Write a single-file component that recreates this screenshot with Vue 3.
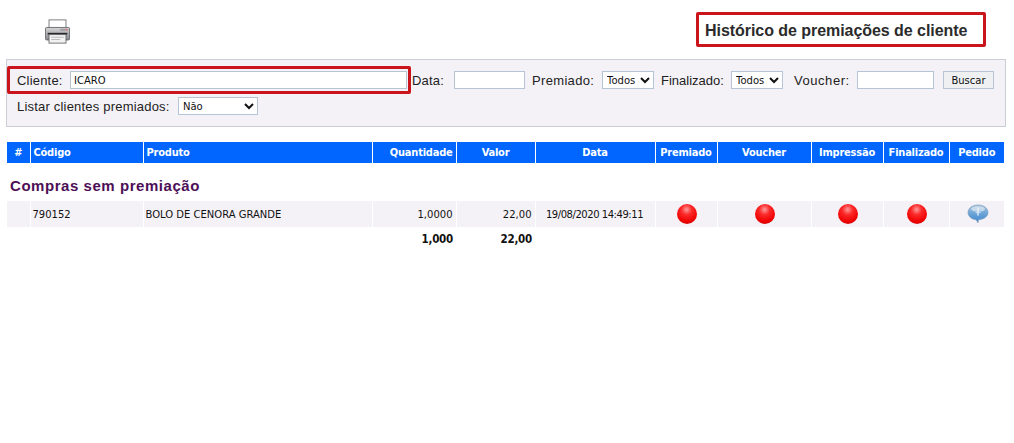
<script setup>
const columns = [
  { label: '#', width: 23, align: 'center' },
  { label: 'Código', width: 113, align: 'left' },
  { label: 'Produto', width: 229, align: 'left' },
  { label: 'Quantidade', width: 84, align: 'right' },
  { label: 'Valor', width: 79, align: 'center' },
  { label: 'Data', width: 120, align: 'center' },
  { label: 'Premiado', width: 62, align: 'center' },
  { label: 'Voucher', width: 94, align: 'center' },
  { label: 'Impressão', width: 72, align: 'center' },
  { label: 'Finalizado', width: 66, align: 'center' },
  { label: 'Pedido', width: 55, align: 'center' },
]
const dots = ['a', 'b', 'c', 'd']
</script>

<template>
  <div class="page">
    <header class="top">
      <svg class="printer" width="25" height="25" viewBox="0 0 28 28">
        <defs>
          <linearGradient id="pbody" x1="0" y1="0" x2="0" y2="1">
            <stop offset="0" stop-color="#d6d6d8" />
            <stop offset="1" stop-color="#85868a" />
          </linearGradient>
        </defs>
        <rect x="4.500" y="1" width="19" height="10" fill="#fff" stroke="#6f7074" />
        <path d="M2 9.500h24a1.500 1.500 0 0 1 1.500 1.500v11a1.500 1.500 0 0 1-1.500 1.500H2A1.500 1.500 0 0 1 .5 22V11A1.500 1.500 0 0 1 2 9.500z" fill="url(#pbody)" stroke="#66676b" />
        <rect x="17" y="11" width="6" height="2" fill="#9a9a9e" />
        <rect x="23" y="11" width="2.500" height="2" fill="#c9757a" />
        <rect x="3" y="15.500" width="22" height="2" fill="#26262a" />
        <rect x="4.500" y="17.500" width="19" height="9.500" fill="#f2f2f2" stroke="#66676b" />
        <path d="M7 20.500h14M7 23h10" stroke="#b5b5b8" />
      </svg>
      <h1 class="title">Histórico de premiações de cliente</h1>
    </header>

    <form class="filters" @submit.prevent>
      <div class="row">
        <div class="client">
          <label class="lbl cli-lbl">Cliente:</label>
          <input class="ctl client-input" value="ICARO" />
        </div>
        <label class="lbl data-lbl">Data:</label>
        <input class="ctl data-input" />
        <label class="lbl prem-lbl">Premiado:</label>
        <select class="ctl sel todos"><option>Todos</option></select>
        <label class="lbl fin-lbl">Finalizado:</label>
        <select class="ctl sel todos"><option>Todos</option></select>
        <label class="lbl vou-lbl">Voucher:</label>
        <input class="ctl vou-input" />
        <button class="ctl btn" type="button">Buscar</button>
      </div>
      <div class="row second">
        <label class="lbl list-lbl">Listar clientes premiados:</label>
        <select class="ctl sel nao"><option>Não</option></select>
      </div>
    </form>

    <table class="grid">
      <colgroup>
        <col v-for="c in columns" :key="c.label" :style="{ width: c.width + 'px' }" />
      </colgroup>
      <thead>
        <tr>
          <th v-for="c in columns" :key="c.label" :class="'a-' + c.align">{{ c.label }}</th>
        </tr>
      </thead>
      <tbody>
        <tr class="group">
          <td colspan="11">Compras sem premiação</td>
        </tr>
        <tr class="item">
          <td></td>
          <td>790152</td>
          <td>BOLO DE CENORA GRANDE</td>
          <td class="a-right">1,0000</td>
          <td class="a-right">22,00</td>
          <td class="a-center date">19/08/2020 14:49:11</td>
          <td v-for="d in dots" :key="d" class="a-center icon">
            <svg width="20" height="20" viewBox="0 0 20 20">
              <defs>
                <radialGradient :id="'ball' + d" cx="0.48" cy="0.28" r="0.75">
                  <stop offset="0" stop-color="#ff9a9a" />
                  <stop offset="0.35" stop-color="#fb2a2a" />
                  <stop offset="0.8" stop-color="#f00000" />
                  <stop offset="1" stop-color="#c80a0a" />
                </radialGradient>
              </defs>
              <circle cx="10" cy="10" r="10" :fill="'url(#ball' + d + ')'" />
            </svg>
          </td>
          <td class="a-center icon">
            <svg width="22" height="20" viewBox="0 0 22 20">
              <defs>
                <linearGradient id="bubble" x1="0" y1="0" x2="0" y2="1">
                  <stop offset="0" stop-color="#a8c6e0" />
                  <stop offset="0.45" stop-color="#6fa6d8" />
                  <stop offset="1" stop-color="#3b86d0" />
                </linearGradient>
              </defs>
              <path d="M11 1C5.500 1 1 4 1 8.500c0 4 4 7 8 7.200l2 3 .5-3c5-.2 9.500-3 9.500-7.200C21 4 16.500 1 11 1z" fill="url(#bubble)" stroke="#7f9fbc" stroke-width=".7" />
              <ellipse cx="11" cy="5" rx="7" ry="2.800" fill="#dbe6f0" opacity=".75" />
              <path d="M11 3.500v8" stroke="#e8f1fa" stroke-width="1.400" />
              <path d="M8.500 8.500h5" stroke="#cfe2f5" stroke-width="1" />
            </svg>
          </td>
        </tr>
        <tr class="total">
          <td colspan="3"></td>
          <td class="a-right">1,000</td>
          <td class="a-right">22,00</td>
          <td colspan="6"></td>
        </tr>
      </tbody>
    </table>
  </div>
</template>

<style>
html, body { margin: 0; background: #fff; }
</style>

<style scoped>
.page {
  width: 1014px;
  height: 443px;
  overflow: hidden;
  font-family: "DejaVu Sans", sans-serif;
  color: #111;
}
.top {
  display: flex;
  justify-content: space-between;
  align-items: flex-start;
  height: 59px;
  padding: 12px 28px 0 45px;
  box-sizing: border-box;
}
.printer { margin-top: 7px; }
.title {
  margin: 0;
  width: 290px;
  height: 35px;
  box-sizing: border-box;
  border: 3px solid #c9151b;
  border-radius: 2px;
  padding-left: 6px;
  font: bold 16px/31px "Liberation Sans", sans-serif;
  letter-spacing: -.05px;
  color: #2b2b2b;
  white-space: nowrap;
}
.filters {
  margin-left: 6px;
  width: 1000px;
  height: 68px;
  box-sizing: border-box;
  border: 1px solid #c9ced4;
  background: #f5f2f7;
  padding-top: 6px;
}
.row {
  display: flex;
  align-items: center;
  height: 28px;
}
.second {
  height: 24px;
  padding-left: 10px;
}
.client {
  display: flex;
  align-items: center;
  width: 404px;
  height: 28px;
  box-sizing: border-box;
  border: 3px solid #c9151b;
  border-radius: 2px;
  padding-left: 7px;
  flex: none;
}
.lbl {
  font: 13px "Liberation Sans", sans-serif;
  letter-spacing: .2px;
  color: #222;
  white-space: nowrap;
  flex: none;
  box-sizing: border-box;
}
.ctl {
  box-sizing: border-box;
  height: 18px;
  border: 1px solid #b5c5d5;
  border-radius: 0;
  background: #fff;
  font: 10px "DejaVu Sans", sans-serif;
  color: #111;
  padding: 0 3px;
  flex: none;
}
.cli-lbl { width: 53px; }
.client-input { width: 337px; }
.data-lbl { width: 42px; margin-left: 1px; }
.data-input { width: 71px; }
.prem-lbl { width: 70px; margin-left: 7px; letter-spacing: .33px; }
.todos { width: 52px; padding: 0; }
.fin-lbl { width: 70px; margin-left: 7px; letter-spacing: 0; }
.vou-lbl { width: 63px; margin-left: 11px; letter-spacing: .55px; }
.vou-input { width: 77px; }
.btn {
  width: 51px;
  margin-left: 9px;
  background: #eef0f2;
  padding: 0;
}
.list-lbl { width: 161px; }
.nao { width: 80px; padding: 0; }

.grid {
  margin: 15px 0 0 7px;
  width: 997px;
  table-layout: fixed;
  border-collapse: collapse;
}
th {
  height: 21px;
  padding: 0 3px 1px;
  box-sizing: border-box;
  background: #0066ff;
  color: #fff;
  font-size: 11px;
  letter-spacing: -.22px;
  font-stretch: condensed;
  font-weight: bold;
  border-left: 1px solid #fff;
  overflow: hidden;
  white-space: nowrap;
}
th:first-child { border-left: 0; }
.a-left { text-align: left; }
.a-right { text-align: right; }
.a-center { text-align: center; }
.group td {
  height: 38px;
  padding: 7px 0 0 3px;
  box-sizing: border-box;
  font: bold 15px "Liberation Sans", sans-serif;
  letter-spacing: .55px;
  color: #4d0f57;
}
.item td {
  height: 26px;
  padding: 0 3px 0 2px;
  background: #f5f2f7;
  border-left: 1px solid #fff;
  font-size: 10px;
  color: #111;
  white-space: nowrap;
  overflow: hidden;
}
.item td:first-child { border-left: 0; }
.item td.date { letter-spacing: -.45px; }
.item td.icon { padding: 0 0 0 2px; }
.icon svg { display: block; margin: 0 auto; }
.total td {
  height: 24px;
  padding: 0 3px;
  font: bold 11.500px "DejaVu Sans", sans-serif;
  font-stretch: condensed;
  letter-spacing: -.25px;
  color: #111;
}
</style>
